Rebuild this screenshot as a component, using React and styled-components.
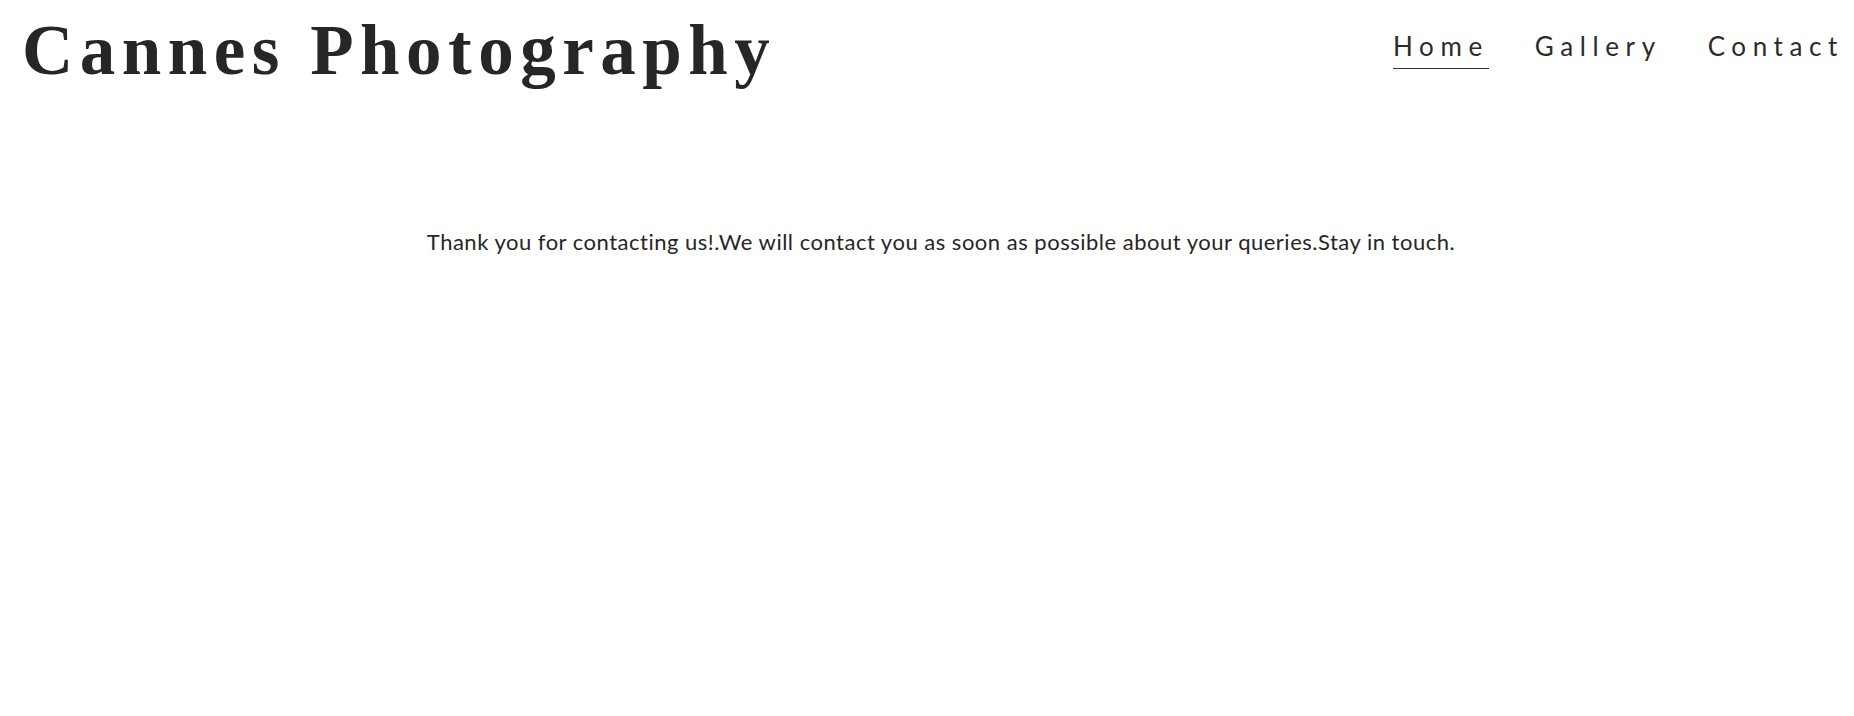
import styled, { createGlobalStyle } from "styled-components";

const GlobalStyle = createGlobalStyle`
  html, body {
    margin: 0;
    padding: 0;
    background: #ffffff;
  }

  body {
    color: #262626;
    font-family: "Lato", "Liberation Sans", sans-serif;
  }
`;

const Page = styled.div`
  min-height: 716px;
  background: #ffffff;
`;

const Header = styled.header`
  display: flex;
  justify-content: space-between;
  align-items: flex-start;
  padding: 0 10px 0 22px;
`;

const Title = styled.h1`
  margin: 0;
  padding-top: 15px;
  font-family: "Liberation Serif", "DejaVu Serif", serif;
  font-size: 71px;
  font-weight: 700;
  line-height: 1;
  letter-spacing: 6.5px;
  color: #262626;
`;

const Nav = styled.nav`
  display: flex;
  gap: 46px;
  padding-top: 33px;
`;

const NavLink = styled.a`
  display: block;
  padding-bottom: 9px;
  font-family: "Lato", "Liberation Sans", sans-serif;
  font-size: 26px;
  line-height: 1;
  letter-spacing: 6.6px;
  color: #2b2b2b;
  text-decoration: none;
  cursor: pointer;
  border-bottom: 1px solid ${({ $active }) => ($active ? "#333333" : "transparent")};
`;

const Main = styled.main`
  display: flex;
  justify-content: center;
  padding: 143px 0 0 28px;
`;

const Message = styled.p`
  margin: 0;
  font-family: "Lato", "Liberation Sans", sans-serif;
  font-size: 22px;
  line-height: 1.2;
  letter-spacing: 0.5px;
  color: #262626;
`;

const links = [
  { label: "Home", active: true },
  { label: "Gallery" },
  { label: "Contact" },
];

function App() {
  return (
    <>
      <GlobalStyle />
      <Page>
        <Header>
          <Title>Cannes Photography</Title>
          <Nav>
            {links.map((link) => (
              <NavLink key={link.label} $active={link.active}>
                {link.label}
              </NavLink>
            ))}
          </Nav>
        </Header>
        <Main>
          <Message>
            Thank you for contacting us!.We will contact you as soon as possible
            about your queries.Stay in touch.
          </Message>
        </Main>
      </Page>
    </>
  );
}

export default App;
